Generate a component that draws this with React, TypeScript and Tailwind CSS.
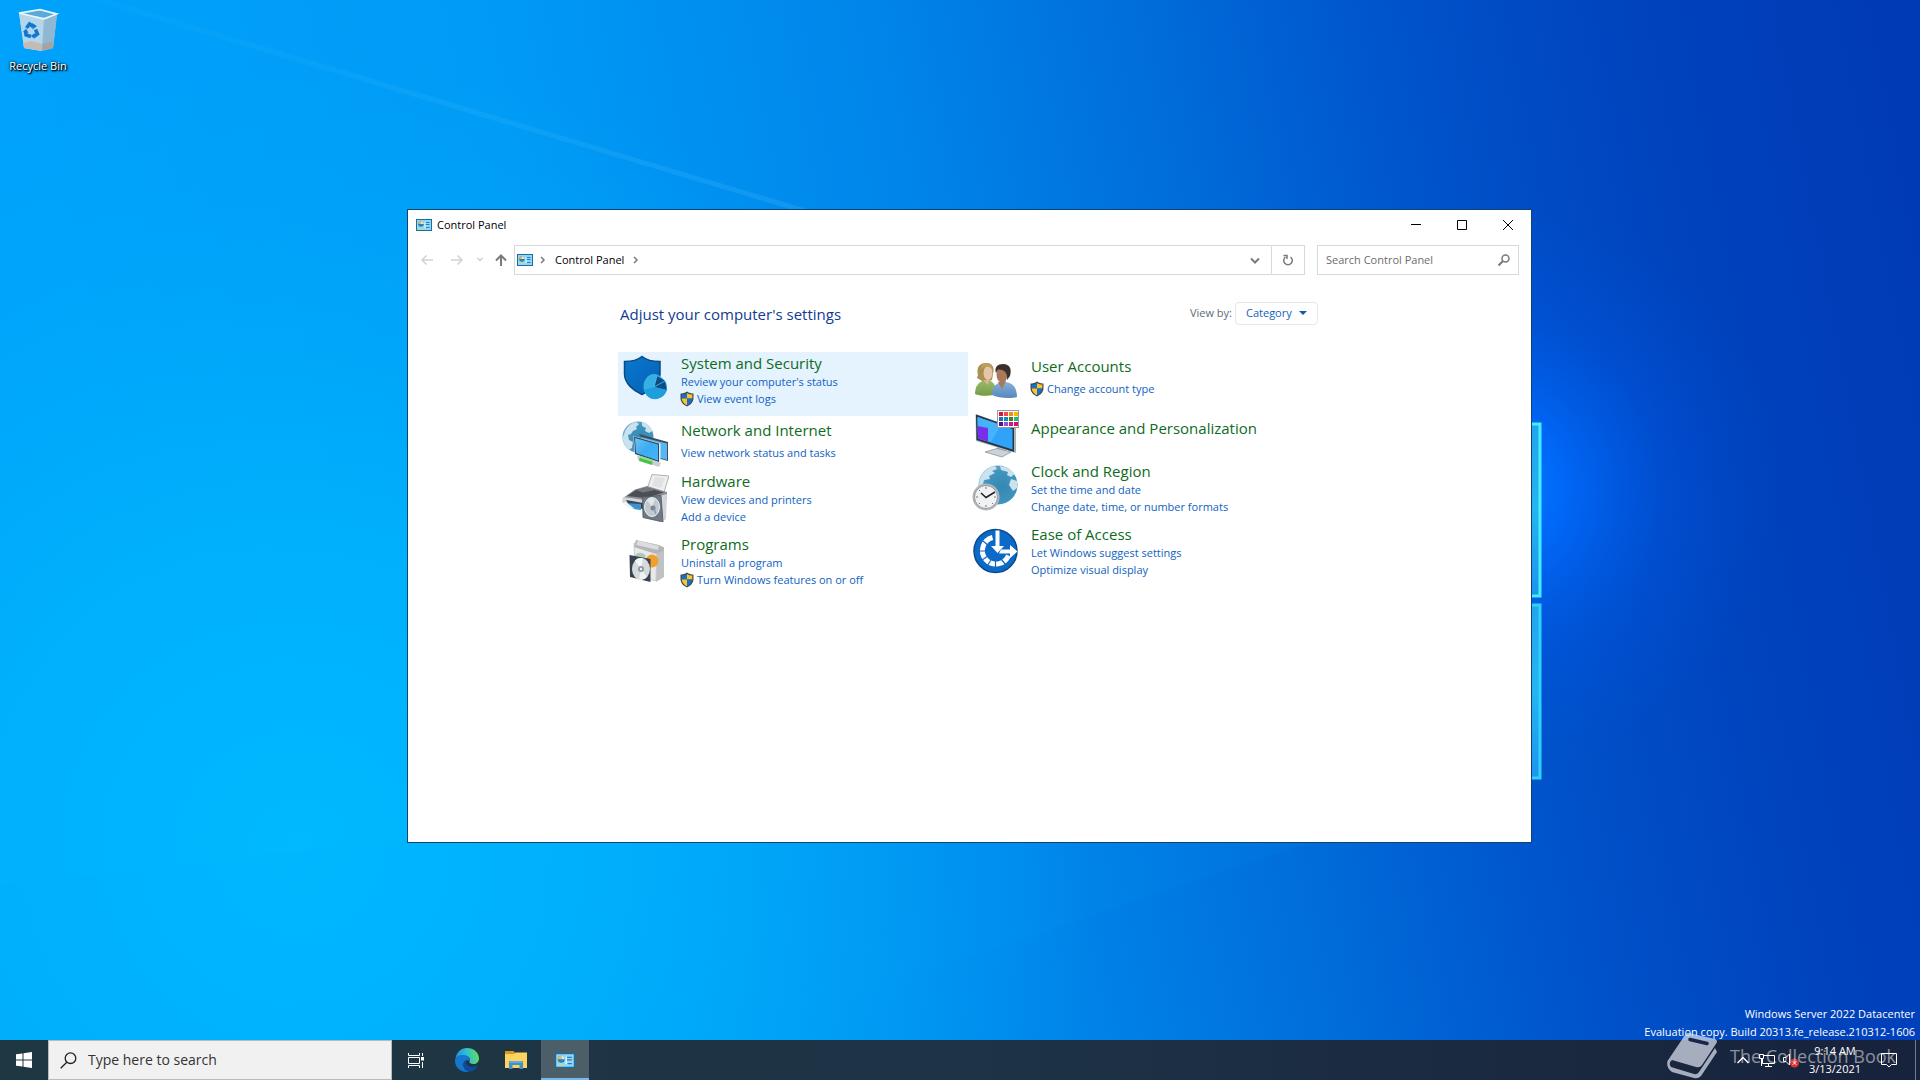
import React, { useState } from 'react';

type LinkItem = { label: string; shield?: boolean };

interface Category {
    title: string;
    icon: React.ReactNode;
    links: LinkItem[];
    tile: string;
    iconBox: string;
    linkBox?: string;
    active?: boolean;
}

const Wallpaper = () => (
    <svg className="absolute inset-0 h-full w-full" viewBox="0 0 1920 1080" preserveAspectRatio="none" aria-hidden="true">
        <defs>
            <linearGradient id="sky" x1="0" y1="0" x2="1850" y2="-350" gradientUnits="userSpaceOnUse">
                <stop offset="0" stopColor="#00a2fb" />
                <stop offset="0.25" stopColor="#009bf6" />
                <stop offset="0.45" stopColor="#0086ea" />
                <stop offset="0.6" stopColor="#006cda" />
                <stop offset="0.72" stopColor="#0054cc" />
                <stop offset="0.85" stopColor="#0043bd" />
                <stop offset="1" stopColor="#003ab4" />
            </linearGradient>
            <radialGradient id="cyan" cx="300" cy="850" r="800" gradientUnits="userSpaceOnUse">
                <stop offset="0" stopColor="#00b9ff" />
                <stop offset="0.4" stopColor="#00b3fc" stopOpacity="0.85" />
                <stop offset="1" stopColor="#00a8f8" stopOpacity="0" />
            </radialGradient>
            <radialGradient id="glow" cx="1490" cy="490" r="290" gradientUnits="userSpaceOnUse">
                <stop offset="0" stopColor="#0080ff" />
                <stop offset="0.25" stopColor="#006cff" stopOpacity="0.85" />
                <stop offset="0.6" stopColor="#005cee" stopOpacity="0.3" />
                <stop offset="1" stopColor="#0050e0" stopOpacity="0" />
            </radialGradient>
            <linearGradient id="pane" x1="0" y1="0" x2="0" y2="1">
                <stop offset="0" stopColor="#22a4ee" />
                <stop offset="0.5" stopColor="#25b4f2" />
                <stop offset="1" stopColor="#1d94ee" />
            </linearGradient>
            <linearGradient id="ray" x1="100" y1="0" x2="800" y2="210" gradientUnits="userSpaceOnUse">
                <stop offset="0" stopColor="#6fd0ff" stopOpacity="0.03" />
                <stop offset="1" stopColor="#6fd0ff" stopOpacity="0.16" />
            </linearGradient>
        </defs>
        <rect width="1920" height="1080" fill="url(#sky)" />
        <rect width="1920" height="1080" fill="url(#cyan)" />
        <path d="M90 0H110L850 222L800 212Z" fill="url(#ray)" />
        <path d="M0 885L407 838H1325L720 1040H0Z" fill="#00b0ff" fillOpacity="0.07" />
        <rect width="1920" height="1080" fill="url(#glow)" />
        <rect x="1300" y="424" width="240" height="172" fill="url(#pane)" stroke="#44eefc" strokeWidth="3" />
        <rect x="1300" y="605" width="240" height="173" fill="url(#pane)" stroke="#2fcffc" strokeWidth="3" />
    </svg>
);

const RecycleBinIcon = () => (
    <svg className="h-12 w-12" viewBox="0 0 48 48" aria-hidden="true">
        <path d="M5 8L26 4.5L43 9L39 43L27 46L10 43Z" fill="#b9d8ec" fillOpacity="0.85" />
        <path d="M5 8L30 14L28 46L10 43Z" fill="#b6d6ea" fillOpacity="0.9" />
        <path d="M30 14L43 9L39 43L28 46Z" fill="#8fb8d3" />
        <path d="M8 9L26 5.5L40 9.5L30 12.500Z" fill="#5aa9d8" />
        <path d="M9.500 38L17 36L28.500 39L28 46L10 43Z" fill="#c2bcb8" />
        <path d="M28.500 39L39.500 36L39 43L28 46Z" fill="#a5a3a5" />
        <path d="M5 8L26 4.500L43 9L30 14Z" fill="none" stroke="#edf7fc" strokeWidth="1.500" />
        <g fill="none" stroke="#0f77cf" strokeWidth="3.500">
            <path d="M12.500 23L15.500 19L19 21.500" />
            <path d="M21.500 24.500L23.500 29L20 31.500" />
            <path d="M17 31.500L12 30L11.500 26" />
        </g>
        <path d="M18 18L23 21L18.500 24.500ZM20.500 28V34L17 31ZM9 27L12 23.500L14.500 28Z" fill="#0f77cf" />
    </svg>
);

const PanelIcon = ({ className }: { className: string }) => (
    <svg className={className} viewBox="0 0 16 12" aria-hidden="true">
        <rect x="0.500" y="0.500" width="15" height="11" fill="#8fd8fb" stroke="#1c6d9e" />
        <circle cx="5" cy="5" r="2.800" fill="#2d7fb5" />
        <path d="M5 5V2.200A2.800 2.800 0 0 1 7.800 5Z" fill="#c9ecfc" />
        <path d="M5 5H2.200A2.800 2.800 0 0 1 5 2.200Z" fill="#f1b643" />
        <path d="M9.500 3.500H13.500M9.500 5.500H13.500M10 8.500H13.500" stroke="#2a7dad" strokeWidth="1" />
        <path d="M2 9.500H7" stroke="#e8cf6a" strokeWidth="1" />
        <path d="M9 3V9" stroke="#e9f8ff" strokeWidth="1" />
    </svg>
);

const Shield = () => (
    <svg className="h-4 w-4 shrink-0" viewBox="0 0 16 16" aria-hidden="true">
        <path d="M8 0.500C6 2 3.500 2.500 1.500 2.500V7C1.500 11 4.500 14 8 15.500C11.500 14 14.500 11 14.500 7V2.500C12.500 2.500 10 2 8 0.500Z" fill="#3c4a55" />
        <path d="M8 2C6.500 3 4.500 3.500 2.700 3.500V7.500H8Z" fill="#1b6fc4" />
        <path d="M8 2C9.500 3 11.500 3.500 13.300 3.500V7.500H8Z" fill="#fbc52f" />
        <path d="M2.700 7.500C3 10.700 5.300 13 8 14.300V7.500Z" fill="#fbc52f" />
        <path d="M13.300 7.500C13 10.700 10.700 13 8 14.300V7.500Z" fill="#1b6fc4" />
    </svg>
);

const SecurityIcon = () => (
    <svg className="h-12 w-12" viewBox="0 0 48 48" aria-hidden="true">
        <defs>
            <linearGradient id="sec" x1="0" y1="0" x2="1" y2="1">
                <stop offset="0" stopColor="#0a78cf" />
                <stop offset="1" stopColor="#0560b6" />
            </linearGradient>
        </defs>
        <path d="M21 2.500C16 6.500 9 7.500 3.500 7.500V20C3.500 29 12 36.500 21 40.500C30 36.500 39 29 39 20V7.500C33 7.500 26 6.500 21 2.500Z" fill="url(#sec)" stroke="#0b4a82" strokeWidth="1.500" />
        <circle cx="35" cy="33.500" r="11" fill="#2399d4" />
        <ellipse cx="33" cy="32.500" rx="10.500" ry="12.500" fill="#35b0e4" />
        <path d="M33 33L36 22L44 27L45.500 36Z" fill="#0b4c86" />
        <path d="M33 33L36 22M33 33L44 27" stroke="#4cc0ee" strokeWidth="0.800" />
        <path d="M23 36C26 46 36 48 43 41L46 36L33 33Z" fill="#1e9fdc" />
    </svg>
);

const GlobeDefs = () => (
    <defs>
        <radialGradient id="globe" cx="0.6" cy="0.55" r="0.6">
            <stop offset="0" stopColor="#3288b3" />
            <stop offset="0.7" stopColor="#4294bd" />
            <stop offset="1" stopColor="#6aaecd" />
        </radialGradient>
        <linearGradient id="screen" x1="0" y1="0" x2="1" y2="1">
            <stop offset="0" stopColor="#69c4f8" />
            <stop offset="0.5" stopColor="#3dacf3" />
            <stop offset="1" stopColor="#41b7fb" />
        </linearGradient>
    </defs>
);

const NetworkIcon = () => (
    <svg className="h-12 w-12" viewBox="0 0 48 48" aria-hidden="true">
        <GlobeDefs />
        <circle cx="17" cy="17" r="15.500" fill="url(#globe)" />
        <path d="M3.500 13C5 7 10 3 15 2L18 4L15 7L16 9L12 11L10 14L7 15L8 20L12 22L11 28L8 29.500C4 26 1.500 22 2 17Z" fill="#c9e2ee" />
        <path d="M21 2C26 3 30 7 31.500 11L28 13L24 11L25 8L21 6Z" fill="#c9e2ee" />
        <path d="M18 14L47 22V41L36 38Z" fill="#404d57" />
        <path d="M20 17L46 23.500V40L36 37Z" fill="#55b7f3" />
        <path d="M12.500 16L39.500 23.500V43L13.500 34.500Z" fill="#e6eef3" />
        <path d="M13 16.500L38 23.500V42L14 34Z" fill="#35495a" />
        <path d="M14 18L37 24.500V40.500L15 33Z" fill="url(#screen)" />
        <path d="M16 35.500L40 43L38 47L17 40Z" fill="#c9cfd3" />
        <path d="M19 36L32 40L31 45L18 41Z" fill="#4cc34b" />
        <path d="M19 37L32 41" stroke="#9be79a" strokeWidth="1.500" />
    </svg>
);

const HardwareIcon = () => (
    <svg className="h-12 w-12" viewBox="0 0 48 48" aria-hidden="true">
        <path d="M31 0.500L48 2L43 18L26 15Z" fill="#efeff0" stroke="#9b9fa3" strokeWidth="0.800" />
        <path d="M34 3L44 4L40 14L31 12Z" fill="#dfe1e4" />
        <path d="M14 15.500L26 12L46 18V26L20 31L2 24Z" fill="#8b8f94" />
        <path d="M15 16L26 13.500L43 18.500L25 24L6 22Z" fill="#4b4e54" />
        <path d="M15 16L26 13.500L34 16L22 18.500Z" fill="#75797e" />
        <path d="M2 23L24 26V35L8 33L1 28Z" fill="#d3d6d9" />
        <path d="M5 26L22 29V35L9 33Z" fill="#39444e" />
        <path d="M4 29L20 30V36L12 35Z" fill="#3a92d1" />
        <path d="M1 29L5 28L14 35L8 34Z" fill="#f2f5f7" />
        <path d="M38 22L46 20L45 45L41 48Z" fill="#d2d6da" />
        <path d="M21.500 23L40 21.500L42 48L22 43.500Z" fill="#6e7985" stroke="#4c5660" strokeWidth="0.800" />
        <ellipse cx="31" cy="33" rx="7.500" ry="9.500" fill="#c1c9d0" stroke="#edf1f3" strokeWidth="1" />
        <path d="M31 33L26 26A7.500 9 0 0 1 34 25Z" fill="#e2e7eb" />
        <circle cx="32" cy="34" r="2.500" fill="#7a8691" />
        <path d="M33 34L35 40" stroke="#8a949d" strokeWidth="1.200" />
    </svg>
);

const ProgramsIcon = () => (
    <svg className="h-12 w-12" viewBox="0 0 48 48" aria-hidden="true">
        <path d="M13 6L36 10L35 44L14 38Z" fill="#e9e9e8" stroke="#c5c5c5" strokeWidth="0.800" />
        <path d="M36 11L43 10V40L35 45Z" fill="#bfc1c3" />
        <path d="M15 3L38 8L43 10.500L42 14L35 17L13 10Z" fill="#b3b5b8" />
        <path d="M17 3.500L38 9L37 13L15 8Z" fill="#dcdddd" />
        <path d="M14 18C18 14 23 16 25 19L21 25L13 23Z" fill="#a7cdb6" />
        <circle cx="31" cy="24" r="6.500" fill="#f0a12d" />
        <path d="M8.500 18L29.500 22V45L9 40Z" fill="#39434d" />
        <ellipse cx="20" cy="32" rx="9" ry="11" fill="#d5dadc" />
        <path d="M20 32L14 23.500A9 11 0 0 1 22 21.500Z" fill="#f5f7f7" />
        <path d="M20 32L26 40A9 11 0 0 1 18 42.500Z" fill="#f0f3f3" />
        <circle cx="20" cy="32" r="3" fill="#8d979f" />
        <circle cx="20" cy="32" r="1.200" fill="#eef2f2" />
    </svg>
);

const UsersIcon = () => (
    <svg className="h-12 w-12" viewBox="0 0 48 48" aria-hidden="true">
        <defs>
            <linearGradient id="blueShirt" x1="0" y1="0" x2="0" y2="1">
                <stop offset="0" stopColor="#86b0da" />
                <stop offset="1" stopColor="#5686bc" />
            </linearGradient>
            <linearGradient id="greenShirt" x1="0" y1="0" x2="0" y2="1">
                <stop offset="0" stopColor="#9dbd6c" />
                <stop offset="1" stopColor="#759b48" />
            </linearGradient>
        </defs>
        <path d="M4 38C4 30 8 25 15 24C21 24 25 28 26 37C23 40 10 41 4 38Z" fill="url(#greenShirt)" />
        <path d="M7 19C5 11 9 7 15 7C21 7 24 11 22 18L21 24L13 26L6 22Z" fill="#a98f50" />
        <ellipse cx="17" cy="17" rx="4.500" ry="7" fill="#e6c5a9" />
        <path d="M9 15C11 10 20 9 22 15L20 8L12 7Z" fill="#bba05e" />
        <path d="M12 24L18 24L17 29Z" fill="#dcb696" />
        <path d="M21 39C21 30 26 26 33 26C41 26 46 31 46 41C39 43 27 42 21 39Z" fill="url(#blueShirt)" />
        <path d="M27 26L35 25L31 33Z" fill="#a9775a" />
        <ellipse cx="31" cy="18.500" rx="5.500" ry="8" fill="#a87a5b" />
        <path d="M25 17C23 11 27 8 32 8C39 8 41 13 39 20L36 24C37 17 33 13 27 13.500Z" fill="#3b3030" />
    </svg>
);

const swatches = [
    ['#d01a3c', '#f04a4a', '#f08a1c', '#f8b800'],
    ['#2171b8', '#1488b8', '#4b7f1c', '#18bf74'],
    ['#4b0fae', '#8a5ac4', '#c0189c', '#e00a68'],
];

const AppearanceIcon = () => (
    <svg className="h-12 w-12" viewBox="0 0 48 48" aria-hidden="true">
        <path d="M26 37L35 40L33 44L25 42Z" fill="#aeb5bb" />
        <path d="M14 42L26 38.500L40 42L31 47Z" fill="#cdd2d8" stroke="#8e959c" strokeWidth="0.800" />
        <path d="M4.500 4L45 18V43L5 31Z" fill="#a9b3ba" />
        <path d="M5 4.500L43 18V42L5.500 30Z" fill="#283742" />
        <path d="M6.500 7L41.500 19V39.500L7 28.500Z" fill="#2fa3f7" />
        <path d="M6.500 7L30 15L20 32L7 28.500Z" fill="#43b4fb" />
        <path d="M6.500 16L17 18V31.500L7 28.500Z" fill="#7a2eea" />
        <rect x="26.500" y="0.500" width="21" height="17" fill="#fff" stroke="#999" />
        {swatches.map((row, r) =>
            row.map((color, c) => <rect key={color} x={28 + c * 5} y={2 + r * 5} width="4" height="4" fill={color} />)
        )}
    </svg>
);

const ClockIcon = () => (
    <svg className="h-12 w-12" viewBox="0 0 48 48" aria-hidden="true">
        <GlobeDefs />
        <circle cx="27" cy="21" r="19.500" fill="url(#globe)" />
        <path d="M8.500 16C11 8 17 3 24 2L26 5L21 7L24 9L18 12L19 15L13 16L12 20L8 22Z" fill="#c9e2ee" />
        <path d="M29 2C36 3 41 6 43.500 10L40 13L36 11L37 8L30 6Z" fill="#c9e2ee" />
        <path d="M40 15L46 17V24L42 27L38 21Z" fill="#c9e2ee" />
        <circle cx="15" cy="33" r="13.500" fill="#b3b7bb" />
        <circle cx="15" cy="33" r="11.500" fill="#eff1f2" stroke="#85898d" strokeWidth="0.800" />
        <path d="M15 23V25M15 41V43M5 33H7M23 33H25M8 26L9 27M22 40L21 39M8 40L9 39" stroke="#777" strokeWidth="1" />
        <path d="M10 29L15 33.500L24 28" fill="none" stroke="#222" strokeWidth="1.500" />
    </svg>
);

const EaseIcon = () => (
    <svg className="h-12 w-12" viewBox="0 0 48 48" aria-hidden="true">
        <circle cx="24.500" cy="24" r="21.500" fill="#0b69c7" stroke="#0b4a8c" strokeWidth="1.500" />
        <path d="M21.500 10.500A13.500 13.500 0 1 0 37.500 28.500" fill="none" stroke="#fff" strokeWidth="5" />
        <path d="M7 24H15M11 33L17 29M16 39L20 33M24.500 34V42M35 38L30 32M12 14L18 19" stroke="#0b69c7" strokeWidth="1.200" />
        <path d="M24.500 3.500H28.500V19H33L26.500 26L20 19H24.500Z" fill="#fff" />
        <path d="M30 22.500H39V18L46.500 24.500L39 31V26.500H28Z" fill="#fff" />
    </svg>
);

const leftColumn: Category[] = [
    {
        title: 'System and Security', icon: <SecurityIcon />, active: true,
        links: [{ label: "Review your computer's status" }, { label: 'View event logs', shield: true }],
        tile: 'min-h-16 pt-px', iconBox: 'pt-px',
    },
    {
        title: 'Network and Internet', icon: <NetworkIcon />,
        links: [{ label: 'View network status and tasks' }],
        tile: 'min-h-[54px] pt-1', iconBox: '', linkBox: 'pt-1',
    },
    {
        title: 'Hardware', icon: <HardwareIcon />,
        links: [{ label: 'View devices and printers' }, { label: 'Add a device' }],
        tile: 'min-h-[63px] pt-px', iconBox: 'pt-[3px]',
    },
    {
        title: 'Programs', icon: <ProgramsIcon />,
        links: [{ label: 'Uninstall a program' }, { label: 'Turn Windows features on or off', shield: true }],
        tile: 'min-h-[63px] pt-px', iconBox: 'pt-[3px]',
    },
];

const rightColumn: Category[] = [
    {
        title: 'User Accounts', icon: <UsersIcon />,
        links: [{ label: 'Change account type', shield: true }],
        tile: 'min-h-[54px] pt-1', iconBox: '', linkBox: 'pt-1',
    },
    {
        title: 'Appearance and Personalization', icon: <AppearanceIcon />,
        links: [],
        tile: 'min-h-[54px] pt-1', iconBox: '', linkBox: '',
    },
    {
        title: 'Clock and Region', icon: <ClockIcon />,
        links: [{ label: 'Set the time and date' }, { label: 'Change date, time, or number formats' }],
        tile: 'min-h-[63px] pt-px', iconBox: 'pt-[3px]',
    },
    {
        title: 'Ease of Access', icon: <EaseIcon />,
        links: [{ label: 'Let Windows suggest settings' }, { label: 'Optimize visual display' }],
        tile: 'min-h-[63px] pt-px', iconBox: 'pt-[3px]',
    },
];

const CategoryTile = ({ item }: { item: Category }) => (
    <li className={`flex items-start gap-3 pl-[3px] ${item.tile} ${item.active ? 'bg-[#e5f3ff]' : ''}`}>
        <div className={`w-12 shrink-0 ${item.iconBox}`}>{item.icon}</div>
        <div className={item.links.length === 0 ? 'pt-2' : ''}>
            <h2 className="text-[15px] leading-5 text-[#0f6b1d]">
                <a href="#" className="hover:underline">{item.title}</a>
            </h2>
            {item.links.length > 0 && (
                <ul className={item.linkBox}>
                    {item.links.map((link) => (
                        <li key={link.label} className="text-[11px] leading-[17px] text-[#0f62c2]">
                            <a href="#" className={`flex items-center hover:underline ${link.shield ? '-ml-0.5 gap-0.5' : ''}`}>
                                {link.shield && <Shield />}
                                {link.label}
                            </a>
                        </li>
                    ))}
                </ul>
            )}
        </div>
    </li>
);

const ControlPanelWindow = () => {
    const [query, setQuery] = useState('');

    return (
        <main className="absolute left-[407px] top-[209px] flex min-h-[634px] w-[1125px] flex-col border border-[#0b4570] bg-white text-black">
            <header className="flex h-[30px] items-center pl-2 text-[11px]">
                <PanelIcon className="h-3 w-4" />
                <span className="ml-[5px] flex-1">Control Panel</span>
                <button className="flex h-full w-[46px] items-center justify-center" aria-label="Minimize">
                    <svg className="h-2.5 w-2.5" viewBox="0 0 10 10"><path d="M0 4.500H10" stroke="#000" /></svg>
                </button>
                <button className="flex h-full w-[46px] items-center justify-center" aria-label="Maximize">
                    <svg className="h-2.5 w-2.5" viewBox="0 0 10 10"><path d="M0.500 0.500H9.500V9.500H0.500Z" fill="none" stroke="#000" /></svg>
                </button>
                <button className="flex h-full w-[46px] items-center justify-center" aria-label="Close">
                    <svg className="h-2.5 w-2.5" viewBox="0 0 10 10"><path d="M0 0L10 10M10 0L0 10" stroke="#000" /></svg>
                </button>
            </header>

            <nav className="mt-[5px] flex h-[30px] items-center pl-1 pr-3 text-[11px]">
                <button className="flex w-[30px] justify-center" aria-label="Back" disabled>
                    <svg className="h-3 w-3" viewBox="0 0 12 12" fill="none" stroke="#d2d2d2" strokeWidth="1.500"><path d="M12 6H1M5.500 1.500L1 6L5.500 10.500" /></svg>
                </button>
                <button className="flex w-[30px] justify-center" aria-label="Forward" disabled>
                    <svg className="h-3 w-3" viewBox="0 0 12 12" fill="none" stroke="#d2d2d2" strokeWidth="1.500"><path d="M0 6H11M6.500 1.500L11 6L6.500 10.500" /></svg>
                </button>
                <button className="flex w-4 justify-center" aria-label="Recent locations" disabled>
                    <svg className="h-1.5 w-1.5" viewBox="0 0 6 6" fill="none" stroke="#d2d2d2" strokeWidth="1.500"><path d="M0.500 1L3 3.500L5.500 1" /></svg>
                </button>
                <button className="flex w-[26px] justify-center" aria-label="Up">
                    <svg className="h-3 w-3" viewBox="0 0 12 12" fill="none" stroke="#7a7a7a" strokeWidth="2"><path d="M6 12V1.500M1 6.500L6 1.500L11 6.500" /></svg>
                </button>
                <div className="flex h-full flex-1 items-center border border-[#d9d9d9]">
                    <PanelIcon className="ml-0.5 h-3 w-4" />
                    <svg className="mx-1.5 h-2 w-2" viewBox="0 0 8 8" fill="none" stroke="#7a7a7a" strokeWidth="1.500"><path d="M2 1L5 4L2 7" /></svg>
                    <a href="#" className="ml-0.5">Control Panel</a>
                    <svg className="mx-2 h-2 w-2" viewBox="0 0 8 8" fill="none" stroke="#7a7a7a" strokeWidth="1.500"><path d="M2 1L5 4L2 7" /></svg>
                    <button className="ml-auto flex h-full w-8 items-center justify-center" aria-label="Previous locations">
                        <svg className="h-2.5 w-2.5" viewBox="0 0 10 10" fill="none" stroke="#7a7a7a" strokeWidth="2"><path d="M1 3.500L5 7.500L9 3.500" /></svg>
                    </button>
                    <button className="flex h-full w-[33px] items-center justify-center border-l border-[#d9d9d9]" aria-label="Refresh">
                        <svg className="h-3 w-3" viewBox="0 0 12 12" fill="none" stroke="#7a7a7a" strokeWidth="1.500"><path d="M8.500 3A4.300 4.300 0 1 1 3.500 3M1.500 1.500H5V5" /></svg>
                    </button>
                </div>
                <label className="ml-3 flex h-full w-[202px] items-center border border-[#d9d9d9] px-2">
                    <input
                        type="text"
                        value={query}
                        onChange={(e) => setQuery(e.target.value)}
                        placeholder="Search Control Panel"
                        aria-label="Search Control Panel"
                        className="min-w-0 flex-1 outline-none placeholder:text-[#6d6d6d]"
                    />
                    <svg className="h-3 w-3" viewBox="0 0 12 12" fill="none" stroke="#7a7a7a" strokeWidth="1.500"><circle cx="7.500" cy="4.500" r="3.500" /><path d="M5 7L0.500 11.500" strokeWidth="2" /></svg>
                </label>
            </nav>

            <section className="mx-auto mt-[27px] w-[703px] pr-[3px]">
                <div className="flex h-[23px] items-center pl-0.5 text-[11px]">
                    <h1 className="flex-1 text-[15px] leading-5 text-[#123a94]">Adjust your computer's settings</h1>
                    <label htmlFor="view-by" className="mr-[3px] text-[#5d6a78]">View by:</label>
                    <div className="relative h-full w-[83px]">
                        <select id="view-by" className="h-full w-full appearance-none rounded-sm border border-[#e2e8ee] bg-white pl-2.5 text-[#0f62c2]">
                            <option>Category</option>
                        </select>
                        <svg className="pointer-events-none absolute right-[11px] top-[9px] h-1 w-2" viewBox="0 0 8 4"><path d="M0 0H8L4 4Z" fill="#0b5cad" /></svg>
                    </div>
                </div>
                <div className="mt-[27px] grid grid-cols-2">
                    <ul>{leftColumn.map((item) => <CategoryTile key={item.title} item={item} />)}</ul>
                    <ul>{rightColumn.map((item) => <CategoryTile key={item.title} item={item} />)}</ul>
                </div>
            </section>
        </main>
    );
};

const EdgeIcon = () => (
    <svg className="h-6 w-6" viewBox="0 0 24 24" aria-hidden="true">
        <defs>
            <linearGradient id="edgeTop" x1="0" y1="0.5" x2="1" y2="0.4">
                <stop offset="0" stopColor="#1c8fdd" />
                <stop offset="0.5" stopColor="#2fc0cf" />
                <stop offset="1" stopColor="#62dd58" />
            </linearGradient>
        </defs>
        <path d="M0.500 11C1 4.500 6 0 12 0C19 0 24 5 24 10.500C24 14 21.500 16 18.500 16C15.500 16 14 15 14.500 13.500C16 11 14 8 10 8C5 8 1 10 0.500 11Z" fill="url(#edgeTop)" />
        <path d="M0 12C1 8 5 6.500 9 7C13 7.500 15.500 10.500 14.300 13.500C12 10.500 8 13 8.500 17C9 21 12 23.500 15 23.600C7 25.500 -0.500 20 0 12Z" fill="#1576cf" />
        <path d="M8.300 15C7.500 20 11 23.800 15 23.600C18.500 23 21 21 22.500 18.500C22.500 17.800 22 17.500 21.500 17.800C16 20.500 10.500 18 11 13C9.500 13.300 8.600 14 8.300 15Z" fill="#0d4c9c" />
    </svg>
);

const Taskbar = () => (
    <footer className="absolute inset-x-0 bottom-0 flex h-10 items-center bg-linear-to-r from-[#1f3742] via-[#1e3346] to-[#17223c] text-white">
        <button className="flex h-full w-12 items-center justify-center" aria-label="Start">
            <svg className="h-4 w-4" viewBox="0 0 16 16" fill="#fff"><path d="M0 2.300L6.500 1.400V7.500H0ZM7.500 1.200L16 0V7.500H7.500ZM0 8.500H6.500V14.600L0 13.700ZM7.500 8.500H16V16L7.500 14.800Z" /></svg>
        </button>
        <label className="flex h-full w-[344px] items-center border border-[#b9b9b9] bg-[#f1f1f1] pl-[11px] text-sm">
            <svg className="h-[17px] w-[17px]" viewBox="0 0 17 17" fill="none" stroke="#222" strokeWidth="1.300"><circle cx="10.500" cy="6.200" r="5.300" /><path d="M6.800 10.200L0.700 16.300" /></svg>
            <input type="text" placeholder="Type here to search" aria-label="Type here to search" className="ml-[11px] min-w-0 flex-1 bg-transparent text-black outline-none placeholder:text-[#333]" />
        </label>
        <button className="flex h-full w-12 items-center justify-center" aria-label="Task View">
            <svg className="h-[15px] w-4" viewBox="0 0 16 15" fill="none" stroke="#fff" strokeWidth="1"><path d="M0.500 0V2.500H11.500V0M0.500 15V12.500H11.500V15M0.500 4.500H11.500V10.500H0.500ZM14.500 0V3M14.500 9V15" /><path d="M13 4H16V7.500H13Z" fill="#fff" stroke="none" /></svg>
        </button>
        <button className="ml-0.5 flex h-full w-[50px] items-center justify-center" aria-label="Microsoft Edge"><EdgeIcon /></button>
        <button className="flex h-full w-12 items-center justify-center" aria-label="File Explorer">
            <svg className="h-[18px] w-[22px]" viewBox="0 0 22 18">
                <path d="M0 0H8.500L10 1.500V4H0Z" fill="#d99a1c" />
                <path d="M0 3H9L10.500 1.500H22V17H0Z" fill="#fdd35f" />
                <path d="M4 10H18V18H14.500V14H7.500V18H4Z" fill="#3f90d0" />
                <path d="M5 10H17L18 12H4Z" fill="#5fabe0" />
            </svg>
        </button>
        <button className="ml-px flex h-full w-12 items-center justify-center border-b-2 border-[#76b9ed] bg-[#4c5f68] pt-0.5" aria-label="Control Panel">
            <PanelIcon className="h-[15px] w-5" />
        </button>

        <div className="ml-auto flex h-full items-center">
            <button className="flex h-full w-6 items-center justify-center" aria-label="Show hidden icons">
                <svg className="h-2 w-3" viewBox="0 0 12 8" fill="none" stroke="#fff" strokeWidth="1.500"><path d="M0.500 7L6 1.500L11.500 7" /></svg>
            </button>
            <button className="flex h-full w-6 items-center justify-center" aria-label="Network">
                <svg className="h-4 w-4" viewBox="0 0 16 16" fill="none" stroke="#fff"><path d="M5 3.500H15.500V11.500H3.500V7M9.500 11.500V14.500M6 14.500H13M0.500 2.500H4.500V6.500H0.500ZM2.500 6.500V14" /></svg>
            </button>
            <button className="flex h-full w-6 items-center justify-center" aria-label="Volume muted">
                <svg className="h-4 w-4" viewBox="0 0 16 16"><path d="M0.500 5.500H3L6.500 2V13L3 9.500H0.500Z" fill="none" stroke="#fff" /><circle cx="11.500" cy="11" r="4.500" fill="#d93036" /><path d="M9.700 9.200L13.300 12.800M13.300 9.200L9.700 12.800" stroke="#fff" /></svg>
            </button>
            <button className="w-16 text-center text-[11px] leading-[18px]">
                <span className="block">9:14 AM</span>
                <span className="block">3/13/2021</span>
            </button>
            <button className="flex h-full w-11 items-center justify-center" aria-label="Notifications">
                <svg className="h-4 w-4" viewBox="0 0 16 16" fill="none" stroke="#fff"><path d="M0.500 1.500H15.500V12.500H10.500L8 15L5.500 12.500H0.500Z" /></svg>
            </button>
            <button className="ml-1 h-full w-[5px] border-l border-[#6f7a8b]" aria-label="Show desktop" />
        </div>
    </footer>
);

export default function App() {
    return (
        <div className="relative h-screen w-full overflow-hidden font-['Open_Sans',sans-serif]">
            <Wallpaper />

            <a href="#" className="absolute left-0 top-[5px] flex w-[76px] flex-col items-center text-[11px] text-white [text-shadow:1px_1px_2px_rgb(0_0_0/100%),0_0_3px_rgb(0_0_0/90%),1px_1px_1px_rgb(0_0_0/90%)]">
                <RecycleBinIcon />
                <span className="mt-1 leading-[18px]">Recycle Bin</span>
            </a>

            <ControlPanelWindow />

            <p className="absolute bottom-[39px] right-[5px] text-right text-[11px] leading-[18px] text-white">
                Windows Server 2022 Datacenter<br />
                Evaluation copy. Build 20313.fe_release.210312-1606
            </p>

            <Taskbar />

            <div className="pointer-events-none absolute bottom-0 right-6 flex items-center gap-3 text-white/50">
                <svg className="h-12 w-[51px]" viewBox="0 0 51 48" aria-hidden="true">
                    <path d="M18 3Q19 0.500 22 1L48 7Q51 8 49.500 11L35 33Q33 36 29 35L5 28Q1 31 4 35L27 42Q30 43 32 40L48 16L50 20L34 44Q31 47 27 46L5 40Q-1 36 0.500 29Z" fill="#d5dbea" fillOpacity="0.75" />
                    <path d="M23 7.500L40 11.500" stroke="#18264a" strokeWidth="3.500" strokeLinecap="round" />
                </svg>
                <span className="text-lg leading-10">The Collection Book</span>
            </div>
        </div>
    );
}
